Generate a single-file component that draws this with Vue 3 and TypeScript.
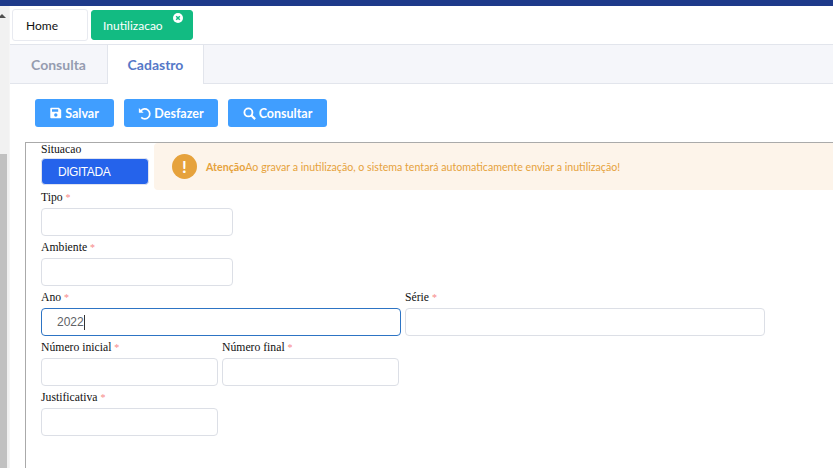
<script setup lang="ts">
const actions = [
  { label: 'Salvar', icon: 'save' },
  { label: 'Desfazer', icon: 'undo' },
  { label: 'Consultar', icon: 'search' },
]
</script>

<template>
  <div class="page">
    <div class="topbar"></div>
    <div class="body">
      <div class="scroll">
        <div class="arrow"></div>
        <div class="thumb"></div>
      </div>
      <div class="main">
        <div class="doc-tabs">
          <div class="doc-tab">Home</div>
          <div class="doc-tab active">
            Inutilizacao
            <svg class="close" viewBox="0 0 10 10" width="10" height="10">
              <circle cx="5" cy="5" r="5" fill="#fff" />
              <path d="M3.2 3.2l3.6 3.6M6.8 3.2l-3.6 3.6" stroke="#12bb82" stroke-width="1.5" />
            </svg>
          </div>
        </div>
        <div class="nav-tabs">
          <div class="nav-tab">Consulta</div>
          <div class="nav-tab selected">Cadastro</div>
        </div>
        <div class="actions">
          <button v-for="a in actions" :key="a.label" class="btn" :class="a.icon" type="button">
            <svg v-if="a.icon === 'save'" viewBox="0 0 12 12" width="12" height="12">
              <path fill="#fff" fill-rule="evenodd" d="M1.3.8h7.6L11.2 3v7.2c0 .6-.5 1-1 1H1.3c-.6 0-1-.4-1-1V1.8c0-.6.4-1 1-1zM2 2.2v2.6h6.2V2.2zM5.8 6.3a1.7 1.7 0 1 0 0 3.4 1.7 1.7 0 0 0 0-3.4z" />
            </svg>
            <svg v-else-if="a.icon === 'undo'" viewBox="0 0 12 12" width="13" height="13">
              <path fill="none" stroke="#fff" stroke-width="1.6" d="M2.6 3.6A4.6 4.6 0 1 1 3 9.6" />
              <path fill="#fff" d="M.8.9v4.4h4.4z" />
            </svg>
            <svg v-else viewBox="0 0 12 12" width="13" height="13">
              <circle cx="5" cy="5" r="3.7" fill="none" stroke="#fff" stroke-width="1.7" />
              <path d="M7.8 7.8l3.4 3.4" stroke="#fff" stroke-width="2" />
            </svg>
            <span>{{ a.label }}</span>
          </button>
        </div>
        <div class="fieldset">
          <div class="top-row">
            <div class="situacao">
              <label class="label">Situacao</label>
              <div class="status">DIGITADA</div>
            </div>
            <div class="alert">
              <div class="alert-icon">!</div>
              <div class="alert-text"><strong>Atenção</strong>Ao gravar a inutilização, o sistema tentará automaticamente enviar a inutilização!</div>
            </div>
          </div>
          <div class="row">
            <div class="field w192">
              <label class="label">Tipo <i>*</i></label>
              <div class="input"></div>
            </div>
          </div>
          <div class="row">
            <div class="field w192">
              <label class="label">Ambiente <i>*</i></label>
              <div class="input"></div>
            </div>
          </div>
          <div class="row">
            <div class="field w360">
              <label class="label">Ano <i>*</i></label>
              <div class="input focused"><span class="value">2022</span><span class="caret"></span></div>
            </div>
            <div class="field w360">
              <label class="label">Série <i>*</i></label>
              <div class="input"></div>
            </div>
          </div>
          <div class="row">
            <div class="field w177">
              <label class="label">Número inicial <i>*</i></label>
              <div class="input"></div>
            </div>
            <div class="field w177">
              <label class="label">Número final <i>*</i></label>
              <div class="input"></div>
            </div>
          </div>
          <div class="row">
            <div class="field w177">
              <label class="label">Justificativa <i>*</i></label>
              <div class="input"></div>
            </div>
          </div>
        </div>
      </div>
    </div>
  </div>
</template>

<style scoped>
.page {
  width: 833px;
  height: 468px;
  overflow: hidden;
  background: #fff;
  display: flex;
  flex-direction: column;
  font-family: Lato, "Liberation Sans", sans-serif;
}
.topbar {
  height: 6px;
  flex: none;
  background: #1e3a8a;
}
.body {
  flex: 1;
  display: flex;
  min-height: 0;
}
.scroll {
  width: 9px;
  flex: none;
  background: #f1f1f1;
  position: relative;
  border-right: 1px solid #f5f5f5;
  box-sizing: content-box;
}
.arrow {
  margin-top: 8px;
  width: 0;
  height: 0;
  border-left: 4px solid transparent;
  border-right: 4px solid transparent;
  border-bottom: 4px solid #505050;
  margin-left: -2px;
}
.thumb {
  margin-top: 136px;
  width: 7px;
  height: 320px;
  background: #c1c1c1;
}
.main {
  flex: 1;
  min-width: 0;
  display: flex;
  flex-direction: column;
}
.doc-tabs {
  height: 38px;
  flex: none;
  display: flex;
  gap: 3px;
  padding: 3px 0 0 2px;
  box-sizing: border-box;
}
.doc-tab {
  width: 76px;
  height: 32px;
  box-sizing: border-box;
  border: 1px solid #e8eaf0;
  border-radius: 3px;
  font-size: 12px;
  color: #111;
  padding: 8px 0 0 13px;
  line-height: 16px;
}
.doc-tab.active {
  position: relative;
  width: 102px;
  height: 30px;
  margin-top: 1px;
  border-color: #12bb82;
  background: #12bb82;
  color: #fff;
  padding: 7px 0 0 11px;
}
.close {
  position: absolute;
  top: 2px;
  right: 9px;
}
.nav-tabs {
  height: 40px;
  flex: none;
  box-sizing: border-box;
  background: #f5f6fa;
  border-top: 1px solid #e2e5ec;
  border-bottom: 1px solid #e2e5ec;
  display: flex;
}
.nav-tab {
  width: 97px;
  box-sizing: border-box;
  text-align: center;
  font-size: 14px;
  font-weight: 700;
  line-height: 40px;
  color: #959cb0;
}
.nav-tab.selected {
  background: #fff;
  color: #5578c8;
  height: 39px;
  border-left: 1px solid #e2e5ec;
  border-right: 1px solid #e2e5ec;
}
.actions {
  height: 58px;
  flex: none;
  box-sizing: border-box;
  display: flex;
  gap: 10px;
  padding: 15px 0 0 25px;
}
.btn {
  height: 28px;
  border: 0;
  border-radius: 3px;
  background: #409eff;
  color: #fff;
  font-family: inherit;
  font-size: 12.5px;
  font-weight: 700;
  display: flex;
  align-items: center;
  justify-content: center;
  gap: 3px;
  padding: 0;
}
.btn.save { width: 79px; }
.btn.undo { width: 94px; }
.btn.search { width: 99px; }
.fieldset {
  flex: 1;
  margin: 0 -20px 0 15px;
  border: 1px solid #aaa;
  border-bottom: 0;
  padding: 0 0 0 15px;
  font-family: "Liberation Serif", serif;
}
.top-row {
  display: flex;
  height: 47px;
}
.situacao {
  width: 108px;
  flex: none;
}
.label {
  display: block;
  font-size: 11.7px;
  line-height: 14px;
  color: #111;
}
.label i {
  color: #f78989;
  font-style: normal;
  font-size: 10px;
}
.status {
  margin-top: 1px;
  height: 27px;
  box-sizing: border-box;
  background: #2563eb;
  border: 1px solid #dfe3f0;
  border-radius: 4px;
  color: #fff;
  font-family: "Liberation Sans", sans-serif;
  font-size: 12px;
  letter-spacing: -0.45px;
  line-height: 27px;
  padding-left: 16px;
}
.alert {
  flex: 1;
  margin-left: 5px;
  background: #fdf4ea;
  border-radius: 4px;
  display: flex;
  align-items: center;
  padding-left: 18px;
  gap: 9px;
  font-family: Lato, sans-serif;
  font-size: 10.65px;
  color: #e6a23c;
}
.alert-icon {
  width: 25px;
  height: 25px;
  border-radius: 50%;
  background: #e6a23c;
  color: #fff;
  font-size: 17px;
  font-weight: 700;
  text-align: center;
  line-height: 25px;
}
.row {
  display: flex;
  gap: 4px;
  height: 50px;
  padding-top: 1px;
  box-sizing: border-box;
}
.field {
  flex: none;
}
.w192 { width: 192px; }
.w360 { width: 360px; }
.w177 { width: 177px; }
.field .label {
  height: 17px;
  box-sizing: border-box;
}
.input {
  height: 28px;
  box-sizing: border-box;
  border: 1px solid #dcdfe6;
  border-radius: 4px;
  background: #fff;
  display: flex;
  align-items: center;
  padding-left: 15px;
  font-family: "Liberation Sans", sans-serif;
  font-size: 12px;
  color: #606266;
}
.input.focused {
  border-color: #2d74c4;
}
.caret {
  width: 1px;
  height: 15px;
  background: #333;
}
</style>
